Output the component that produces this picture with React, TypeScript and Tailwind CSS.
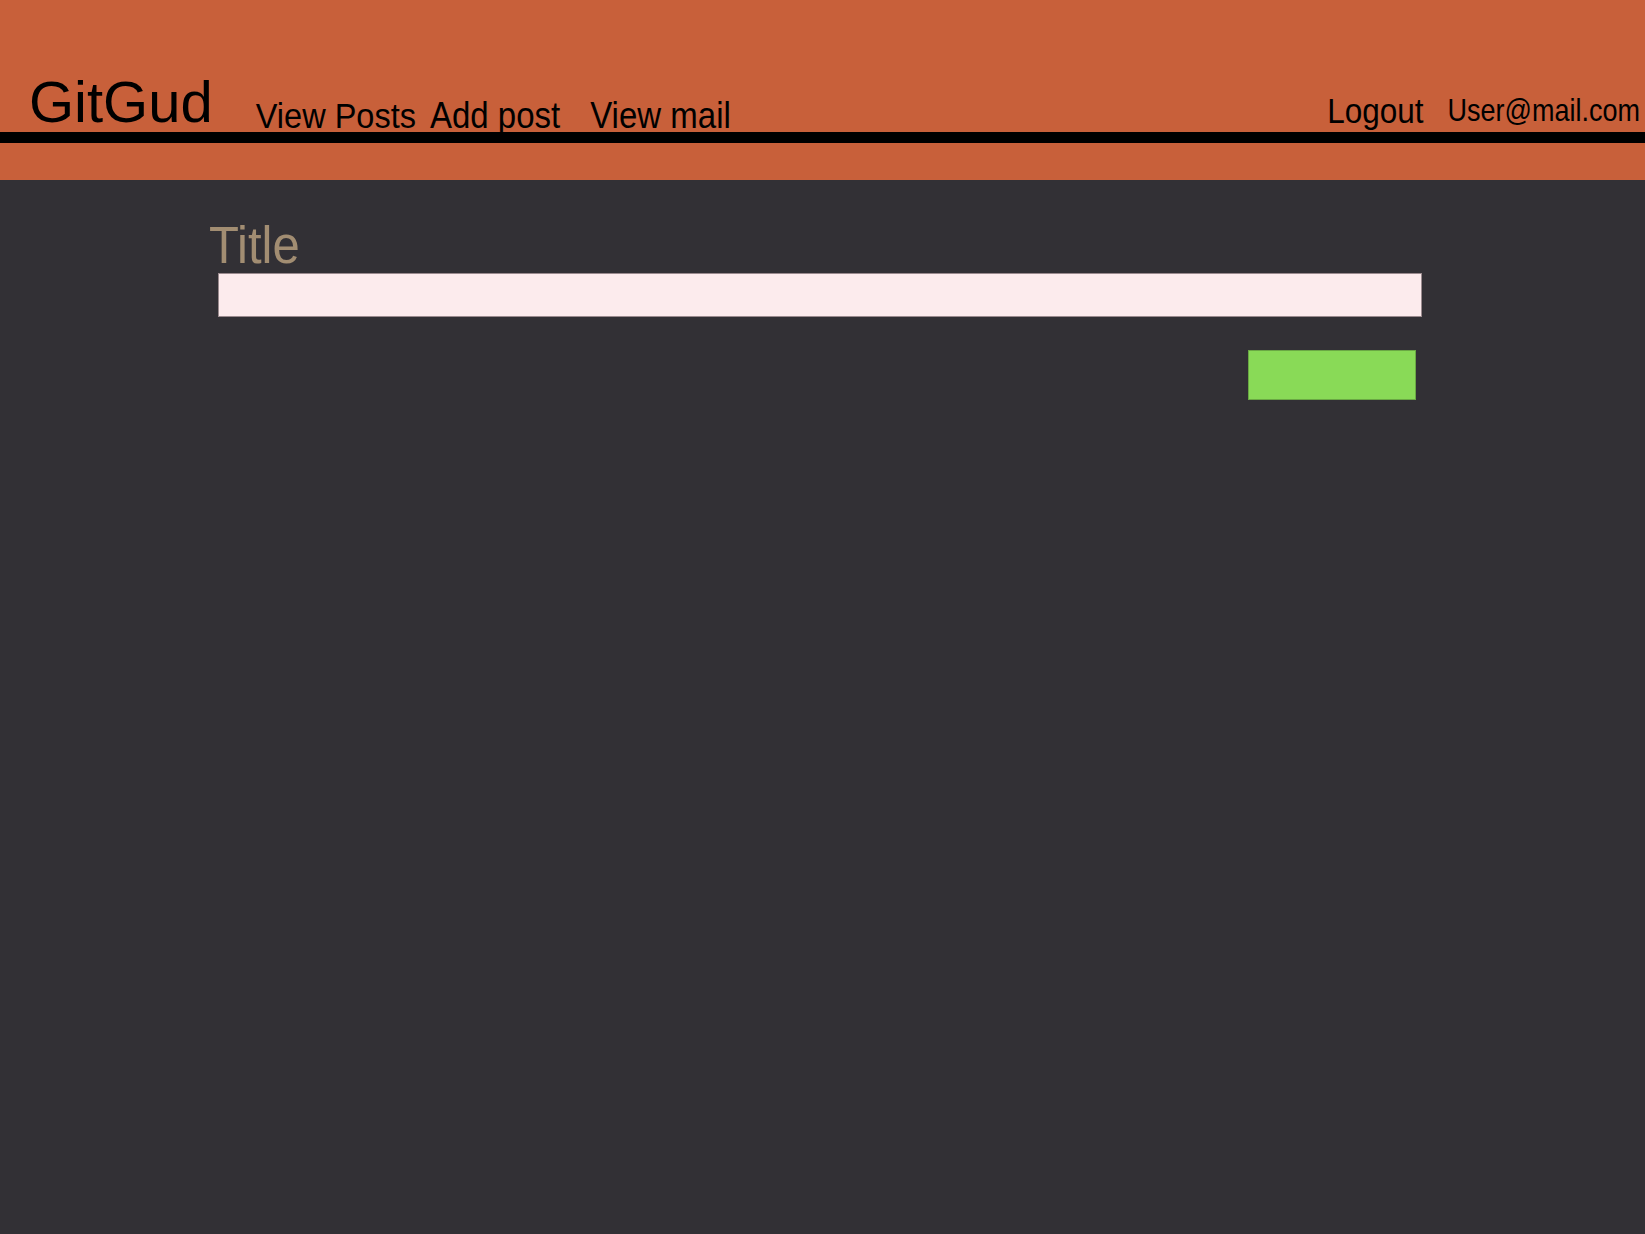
export default function App() {
  return (
    <div className="min-h-[1234px] w-full bg-[#323035] font-['Liberation_Sans',Arial,sans-serif]">
      <header className="flex h-[180px] flex-col bg-[#c8603a]">
        <div className="flex h-[132px] items-end pr-[5px] pl-[29px] text-black">
          <a className="mb-[1px] text-[58px] leading-none">GitGud</a>
          <nav className="flex items-end">
            <a className="ml-[43px] text-[32.5px] leading-none scale-y-110">View Posts</a>
            <a className="ml-[14px] text-[33px] leading-none scale-y-110">Add post</a>
            <a className="ml-[30px] text-[33px] leading-none scale-y-110">View mail</a>
          </nav>
          <a className="mb-[5px] ml-auto text-[31.5px] leading-none scale-y-110">Logout</a>
          <span className="mb-[7px] ml-[24px] text-[27px] leading-none scale-y-115">User@mail.com</span>
        </div>
        <div className="h-[11px] w-full bg-black" />
      </header>
      <main className="flex flex-col pt-[42px] pl-[218px]">
        <label className="-ml-[9px] text-[49px] leading-none text-[#a28d72] scale-y-105 origin-bottom">Title</label>
        <input
          type="text"
          className="mt-[2px] h-[44px] w-[1204px] border border-[#9a8a8e] bg-[#fcebed] px-3 outline-none"
        />
        <div className="flex w-[1204px] justify-end pr-[6px]">
          <button className="mt-[33px] h-[50px] w-[168px] border border-[#6aa844] bg-[#89da57]" />
        </div>
      </main>
    </div>
  )
}
